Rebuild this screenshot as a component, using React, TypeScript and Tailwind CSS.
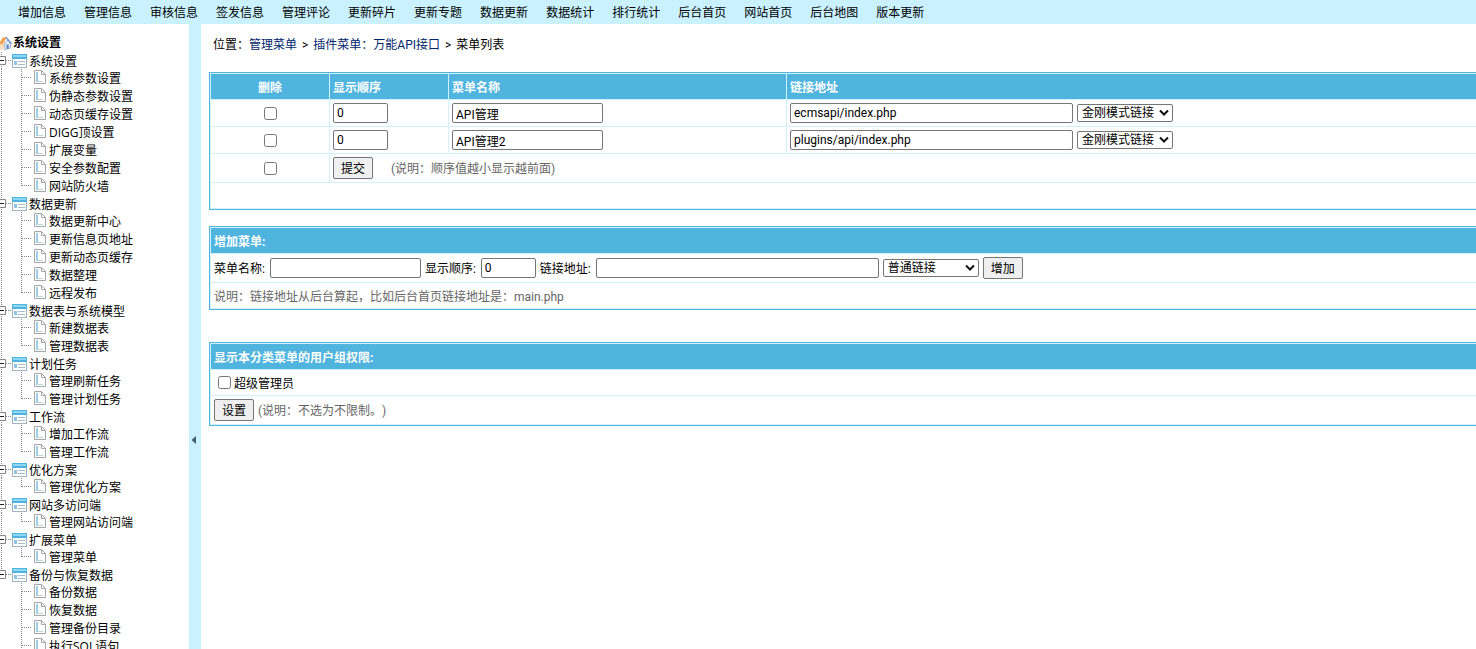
import { useState } from 'react';
import type { ReactNode } from 'react';

const navItems = [
  '增加信息', '管理信息', '审核信息', '签发信息', '管理评论', '更新碎片', '更新专题',
  '数据更新', '数据统计', '排行统计', '后台首页', '网站首页', '后台地图', '版本更新',
];

const groups = [
  { title: '系统设置', items: ['系统参数设置', '伪静态参数设置', '动态页缓存设置', 'DIGG顶设置', '扩展变量', '安全参数配置', '网站防火墙'] },
  { title: '数据更新', items: ['数据更新中心', '更新信息页地址', '更新动态页缓存', '数据整理', '远程发布'] },
  { title: '数据表与系统模型', items: ['新建数据表', '管理数据表'] },
  { title: '计划任务', items: ['管理刷新任务', '管理计划任务'] },
  { title: '工作流', items: ['增加工作流', '管理工作流'] },
  { title: '优化方案', items: ['管理优化方案'] },
  { title: '网站多访问端', items: ['管理网站访问端'] },
  { title: '扩展菜单', items: ['管理菜单'] },
  { title: '备份与恢复数据', items: ['备份数据', '恢复数据', '管理备份目录', '执行SQL语句'] },
];

const menuRows = [
  { name: 'API管理', url: 'ecmsapi/index.php' },
  { name: 'API管理2', url: 'plugins/api/index.php' },
];

const linkModes = ['金刚模式链接', '普通链接'];

function HomeIcon() {
  return (
    <svg width="12" height="16" viewBox="0 0 12 16" className="shrink-0" aria-hidden="true">
      <path d="M0 9L5 5.5L5.5 14.5H0Z" fill="#f6dcc0" />
      <path d="M4.5 9L7.5 5L10.5 9V13L5 14.5Z" fill="#e3edfa" stroke="#8aa6d2" strokeWidth="0.8" />
      <path d="M-1 8.5L3 2.2L7 2.2L2.2 9.4Z" fill="#f3a14e" />
      <path d="M6 2.2L11.6 9" fill="none" stroke="#7f9fd4" strokeWidth="1.6" />
      <rect x="6.5" y="9.5" width="2.2" height="4.3" fill="#5b83c4" />
    </svg>
  );
}

function FolderIcon() {
  return (
    <svg width="16" height="14" viewBox="0 0 16 14" className="shrink-0" aria-hidden="true">
      <rect x="0.5" y="0.5" width="14" height="13" fill="#fff" stroke="#9fb4be" />
      <rect x="0" y="0" width="15" height="5" fill="#4fb3e0" />
      <rect x="1" y="1" width="13" height="2" fill="#8fd6f3" />
      <rect x="2" y="7" width="3" height="4" fill="#8ec4e8" />
      <path d="M6 7.5H13M6 10.5H13" stroke="#a9bcc6" />
    </svg>
  );
}

function PageIcon() {
  return (
    <svg width="12" height="14" viewBox="0 0 12 14" className="mb-0.5 shrink-0" aria-hidden="true">
      <path d="M0.5 0.5H7.5L11.5 4.5V13.5H0.5Z" fill="#fff" stroke="#a6a6a6" />
      <path d="M7.5 0.5V4.5H11.5" fill="none" stroke="#a6a6a6" />
      <rect x="2" y="2" width="2" height="10" fill="#9ccdea" />
      <rect x="4" y="11" width="5" height="1" fill="#b5d9ea" />
    </svg>
  );
}

function GroupBranch({ last }: { last: boolean }) {
  return (
    <svg width="12" height="17" viewBox="0 0 12 17" className="shrink-0" aria-hidden="true">
      <path d={last ? 'M1.5 0V9' : 'M1.5 0V17'} stroke="#888" strokeDasharray="1 1" />
      <path d="M6 8.5H12" stroke="#888" strokeDasharray="1 1" />
      <path d="M-3.5 4.5H5.5V12.5H-3.5Z" fill="#fff" stroke="#848484" />
      <path d="M0 8.5H4" stroke="#222" />
    </svg>
  );
}

function ItemBranch({ last, trunk }: { last: boolean; trunk: boolean }) {
  return (
    <svg width="34" height="18" viewBox="0 0 34 18" className="shrink-0" aria-hidden="true">
      {trunk && <path d="M1.5 0V18" stroke="#888" strokeDasharray="1 1" />}
      <path d={last ? 'M21.5 0V9' : 'M21.5 0V18'} stroke="#888" strokeDasharray="1 1" />
      <path d="M22 8.5H32" stroke="#888" strokeDasharray="1 1" />
    </svg>
  );
}

function Field({ label, value = '', width }: { label: string; value?: string; width: string }) {
  return (
    <input
      type="text"
      aria-label={label}
      defaultValue={value}
      className={`h-5 rounded-xs border border-[#767676] bg-white px-[3px] align-middle text-xs ${width}`}
    />
  );
}

function ModeSelect({ label, value }: { label: string; value: string }) {
  return (
    <span className="relative inline-block h-[18px] w-24 align-middle">
      <select
        aria-label={label}
        defaultValue={value}
        className="block h-[18px] w-full appearance-none rounded-xs border border-[#767676] bg-white pl-1 text-xs leading-4"
      >
        {linkModes.map((m) => (
          <option key={m}>{m}</option>
        ))}
      </select>
      <svg width="10" height="8" viewBox="0 0 10 8" className="pointer-events-none absolute top-[5px] right-1" aria-hidden="true">
        <path d="M1 1.5L5 5.5L9 1.5" fill="none" stroke="#111" strokeWidth="2" />
      </svg>
    </span>
  );
}

function Button({ children }: { children: ReactNode }) {
  return (
    <button type="button" className="h-[22px] w-10 rounded-xs border border-[#767676] bg-[#efefef] pt-0.5 align-middle text-xs">
      {children}
    </button>
  );
}

const check = 'm-0 size-[13px] align-middle';
const table = 'w-full table-fixed border-separate border-spacing-px border border-[#4fb4de] bg-[#d3f1fb]';
const head = 'h-[25px] bg-[#4fb4de] px-[3px] pt-0.5 pb-0 text-left font-bold text-white';
const cell = 'bg-white px-[3px] py-0';
const label = 'flex items-center gap-[5px]';

export default function App() {
  const [open, setOpen] = useState(true);
  return (
    <div className="flex h-screen flex-col overflow-hidden bg-white font-['Open_Sans','Noto_Sans_CJK_SC',sans-serif] text-xs text-black">
      <nav className="flex h-6 shrink-0 items-center gap-[18px] bg-[#c9f1ff] px-[18px] pt-0.5 whitespace-nowrap">
        {navItems.map((n) => (
          <a key={n} href="#">{n}</a>
        ))}
      </nav>
      <div className="flex min-h-0 flex-1">
        {open && (
          <aside className="w-[189px] shrink-0 overflow-hidden pt-[9px] whitespace-nowrap">
            <div className="flex h-[19px] items-center gap-px font-bold">
              <HomeIcon />
              系统设置
            </div>
            <ul>
              {groups.map((g, gi) => {
                const lastGroup = gi === groups.length - 1;
                return (
                  <li key={g.title}>
                    <div className="flex h-[17px] items-center">
                      <GroupBranch last={lastGroup} />
                      <FolderIcon />
                      <a href="#" className="pt-0.5 pl-px">{g.title}</a>
                    </div>
                    <ul>
                      {g.items.map((it, i) => (
                        <li key={it} className="flex h-[18px] items-center">
                          <ItemBranch last={i === g.items.length - 1 && !lastGroup} trunk={!lastGroup} />
                          <PageIcon />
                          <a href="#" className="pt-0.5 pl-[3px]">{it}</a>
                        </li>
                      ))}
                    </ul>
                  </li>
                );
              })}
            </ul>
          </aside>
        )}
        <button
          type="button"
          aria-label="切换侧栏"
          onClick={() => setOpen(!open)}
          className="flex w-3 shrink-0 items-center bg-[#c9f1ff] pt-[206px] pl-[2px]"
        >
          <svg width="5" height="8" viewBox="0 0 5 8" aria-hidden="true">
            <path d="M5 0V8L0.5 4Z" fill="#44606c" />
          </svg>
        </button>
        <main className="min-w-0 flex-1 overflow-hidden pl-2 font-[Roboto,'Noto_Sans_CJK_SC',sans-serif] [text-spacing-trim:space-all]">
          <div className="flex h-12 gap-[5px] pt-3 pl-1 leading-[18px] whitespace-nowrap">
            <span>位置：<a href="#" className="text-[#00246b]">管理菜单</a></span>
            <span>&gt;</span>
            <a href="#" className="text-[#00246b]">插件菜单：万能API接口</a>
            <span>&gt;</span>
            <span>菜单列表</span>
          </div>
          <div className="-mr-1 flex flex-col">
            <table className={table}>
              <colgroup>
                <col className="w-[118px]" />
                <col className="w-[118px]" />
                <col className="w-[337px]" />
                <col />
              </colgroup>
              <thead>
                <tr>
                  <th className="h-[25px] bg-[#4fb4de] px-0 pt-0.5 pb-0 text-center font-bold text-white">删除</th>
                  <th className={head}>显示顺序</th>
                  <th className={head}>菜单名称</th>
                  <th className={head}>链接地址</th>
                </tr>
              </thead>
              <tbody>
                {menuRows.map((r) => (
                  <tr key={r.name} className="h-[26px]">
                    <td className="bg-white p-0 text-center leading-5">
                      <input type="checkbox" aria-label={`删除 ${r.name}`} className={check} />
                    </td>
                    <td className={cell}><Field label="显示顺序" value="0" width="w-[55px]" /></td>
                    <td className={cell}><Field label="菜单名称" value={r.name} width="w-[151px]" /></td>
                    <td className={cell}>
                      <div className="flex items-center gap-1">
                        <Field label="链接地址" value={r.url} width="w-[283px]" />
                        <ModeSelect label="链接模式" value="金刚模式链接" />
                      </div>
                    </td>
                  </tr>
                ))}
                <tr className="h-7">
                  <td className="bg-white p-0 text-center leading-5">
                    <input type="checkbox" aria-label="全选" className={check} />
                  </td>
                  <td className={cell} colSpan={3}>
                    <div className="flex items-center gap-[18px] text-[#666]">
                      <span className="flex text-black"><Button>提交</Button></span>
                      <span className="pt-0.5">(说明：顺序值越小显示越前面)</span>
                    </div>
                  </td>
                </tr>
                <tr className="h-[25px]">
                  <td className={cell} colSpan={4} />
                </tr>
              </tbody>
            </table>

            <table className={`${table} mt-4`}>
              <thead>
                <tr><th className={head}>增加菜单:</th></tr>
              </thead>
              <tbody>
                <tr className="h-7">
                  <td className={cell}>
                    <div className="flex items-center gap-1 whitespace-nowrap">
                      <label className={label}><span className="pt-0.5">菜单名称:</span><Field label="菜单名称" width="w-[151px]" /></label>
                      <label className={label}><span className="pt-0.5">显示顺序:</span><Field label="显示顺序" value="0" width="w-[55px]" /></label>
                      <label className={label}><span className="pt-0.5">链接地址:</span><Field label="链接地址" width="w-[283px]" /></label>
                      <ModeSelect label="链接模式" value="普通链接" />
                      <Button>增加</Button>
                    </div>
                  </td>
                </tr>
                <tr className="h-[25px]">
                  <td className="bg-white px-[3px] pt-0.5 pb-0 text-[#666]">说明：链接地址从后台算起，比如后台首页链接地址是：main.php</td>
                </tr>
              </tbody>
            </table>

            <table className={`${table} mt-8`}>
              <thead>
                <tr><th className={head}>显示本分类菜单的用户组权限:</th></tr>
              </thead>
              <tbody>
                <tr className="h-[25px]">
                  <td className={cell}>
                    <label className="flex items-center gap-[3px] pl-1">
                      <input type="checkbox" className={check} />
                      <span className="pt-0.5">超级管理员</span>
                    </label>
                  </td>
                </tr>
                <tr className="h-7">
                  <td className={cell}>
                    <div className="flex items-center gap-1 text-[#666]">
                      <span className="flex text-black"><Button>设置</Button></span>
                      <span className="pt-0.5">(说明：不选为不限制。)</span>
                    </div>
                  </td>
                </tr>
              </tbody>
            </table>
          </div>
        </main>
      </div>
    </div>
  );
}
